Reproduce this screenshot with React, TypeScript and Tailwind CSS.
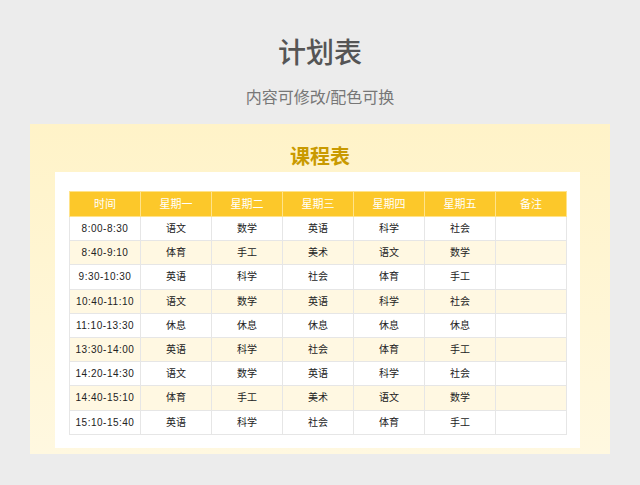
const rows = [
  ['8:00-8:30', '语文', '数学', '英语', '科学', '社会'],
  ['8:40-9:10', '体育', '手工', '美术', '语文', '数学'],
  ['9:30-10:30', '英语', '科学', '社会', '体育', '手工'],
  ['10:40-11:10', '语文', '数学', '英语', '科学', '社会'],
  ['11:10-13:30', '休息', '休息', '休息', '休息', '休息'],
  ['13:30-14:00', '英语', '科学', '社会', '体育', '手工'],
  ['14:20-14:30', '语文', '数学', '英语', '科学', '社会'],
  ['14:40-15:10', '体育', '手工', '美术', '语文', '数学'],
  ['15:10-15:40', '英语', '科学', '社会', '体育', '手工'],
];
const head = ['时间', '星期一', '星期二', '星期三', '星期四', '星期五', '备注'];

export default function App() {
  return (
    <div
      className="w-[640px] h-[485px] bg-[#ececec] flex flex-col items-center overflow-hidden"
      style={{ fontFamily: '"Liberation Sans", "Noto Sans CJK SC", sans-serif' }}
    >
      <div className="mt-[36px] text-[28px] leading-[36px] text-[#555] font-medium">计划表</div>
      <div className="mt-[15px] text-[16px] leading-[22px] text-[#777]">内容可修改/配色可换</div>
      <div className="mt-[15px] w-[580px] h-[330px] bg-gradient-to-b from-[#fff3c8] to-[#fff8e0] flex flex-col items-center">
        <div className="mt-[20px] text-[20px] leading-[26px] font-bold text-[#c99a00]">课程表</div>
        <div className="mt-[2px] self-start ml-[25px] w-[525px] h-[276px] bg-white pt-[19px] pl-[14px]">
          <table className="border-collapse text-[10px] text-[#222] table-fixed w-[497px]">
            <thead>
              <tr className="bg-[#fcc82a] h-[25px]">
                {head.map((h) => (
                  <th key={h} className="w-[71px] border border-[#ffe38a] text-white font-normal text-[11px]">{h}</th>
                ))}
              </tr>
            </thead>
            <tbody>
              {rows.map((r, i) => (
                <tr key={i} className={`h-[24.2px] ${i % 2 ? 'bg-[#fff8e2]' : 'bg-white'}`}>
                  {[...r, ''].map((c, j) => (
                    <td key={j} className={`border border-[#e6e6e6] text-center p-0 ${j === 0 ? 'tracking-[0.5px]' : ''}`}>{c}</td>
                  ))}
                </tr>
              ))}
            </tbody>
          </table>
        </div>
      </div>
    </div>
  );
}
